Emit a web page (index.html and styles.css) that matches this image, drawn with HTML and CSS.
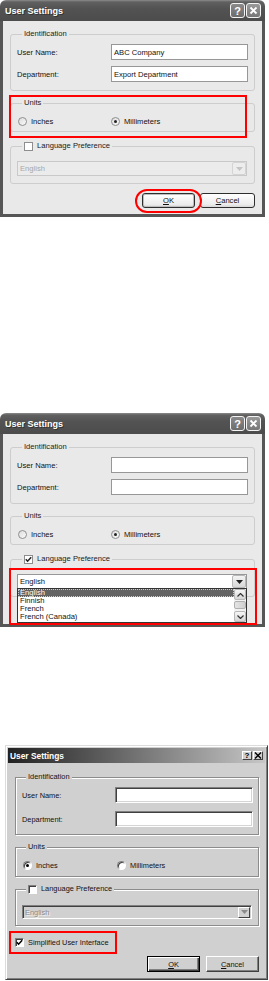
FILE: index.html
```html
<!DOCTYPE html>
<html lang="en">
<head>
  <meta charset="UTF-8">
  <title>User Settings</title>
  <link rel="stylesheet" href="styles.css">
</head>
<body>

<!-- First dialog: units and OK marked -->
<div class="dialog xp d1">
  <div class="titlebar">
    <span class="title">User Settings</span>
    <span class="tbtns">
      <span class="tbtn help">?</span>
      <span class="tbtn close"><svg viewBox="0 0 13 13" width="13" height="13"><path d="M3.5 3.5 L9.5 9.5 M9.5 3.5 L3.5 9.5" stroke="#fff" stroke-width="1.8"/></svg></span>
    </span>
  </div>
  <div class="body">
    <fieldset class="group ident">
      <legend>Identification</legend>
      <div class="field"><label>User Name:</label><div class="edit">ABC Company</div></div>
      <div class="field"><label>Department:</label><div class="edit">Export Department</div></div>
    </fieldset>
    <fieldset class="group units">
      <legend>Units</legend>
      <div class="radios">
        <span class="opt"><span class="radio"></span>Inches</span>
        <span class="opt"><span class="radio on"></span>Millimeters</span>
      </div>
    </fieldset>
    <fieldset class="group lang">
      <legend><span class="check"></span>Language Preference</legend>
      <div class="combo disabled"><span class="value">English</span><span class="arrow"><svg viewBox="0 0 7 4" width="7" height="4"><path d="M0 0 H7 L3.5 4 Z" fill="#c4c4c4"/></svg></span></div>
    </fieldset>
    <div class="buttons">
      <span class="btn ok"><u>O</u>K</span>
      <span class="btn cancel"><u>C</u>ancel</span>
    </div>
  </div>
  <div class="mark units-mark"></div>
  <div class="mark ok-mark"></div>
</div>

<!-- Second dialog: language list open -->
<div class="dialog xp d2">
  <div class="titlebar">
    <span class="title">User Settings</span>
    <span class="tbtns">
      <span class="tbtn help">?</span>
      <span class="tbtn close"><svg viewBox="0 0 13 13" width="13" height="13"><path d="M3.5 3.5 L9.5 9.5 M9.5 3.5 L3.5 9.5" stroke="#fff" stroke-width="1.8"/></svg></span>
    </span>
  </div>
  <div class="body">
    <fieldset class="group ident">
      <legend>Identification</legend>
      <div class="field"><label>User Name:</label><div class="edit"></div></div>
      <div class="field"><label>Department:</label><div class="edit"></div></div>
    </fieldset>
    <fieldset class="group units">
      <legend>Units</legend>
      <div class="radios">
        <span class="opt"><span class="radio"></span>Inches</span>
        <span class="opt"><span class="radio on"></span>Millimeters</span>
      </div>
    </fieldset>
    <fieldset class="group lang">
      <legend><span class="check on"><svg viewBox="0 0 9 9" width="9" height="9"><path d="M1.8 4.2 L3.6 6.2 L7.2 2.2" stroke="#222" stroke-width="1.5" fill="none"/></svg></span>Language Preference</legend>
      <div class="combo"><span class="value">English</span><span class="arrow"><svg viewBox="0 0 7 4" width="7" height="4"><path d="M0 0 H7 L3.5 4 Z" fill="#222"/></svg></span>
        <div class="droplist">
          <div class="items">
            <div class="item sel">English</div>
            <div class="item">Finnish</div>
            <div class="item">French</div>
            <div class="item">French (Canada)</div>
          </div>
          <div class="scroll">
            <span class="sbtn"><svg viewBox="0 0 7 4" width="7" height="4"><path d="M0.5 3.5 L3.5 0.5 L6.5 3.5" stroke="#333" stroke-width="1.2" fill="none"/></svg></span>
            <span class="thumb"></span>
            <span class="track"></span>
            <span class="sbtn"><svg viewBox="0 0 7 4" width="7" height="4"><path d="M0.5 0.5 L3.5 3.5 L6.5 0.5" stroke="#333" stroke-width="1.2" fill="none"/></svg></span>
          </div>
        </div>
      </div>
    </fieldset>
  </div>
  <div class="mark list-mark"></div>
</div>

<!-- Third dialog: classic look, simplified UI checked -->
<div class="dialog classic d3">
  <div class="titlebar">
    <span class="title">User Settings</span>
    <span class="tbtns">
      <span class="tbtn">?</span>
      <span class="tbtn"><svg viewBox="0 0 8 7" width="8" height="7"><path d="M1 0.5 L7 6.5 M7 0.5 L1 6.5" stroke="#000" stroke-width="1.4"/></svg></span>
    </span>
  </div>
  <div class="body">
    <fieldset class="group ident">
      <legend>Identification</legend>
      <div class="field"><label>User Name:</label><div class="edit"></div></div>
      <div class="field"><label>Department:</label><div class="edit"></div></div>
    </fieldset>
    <fieldset class="group units">
      <legend>Units</legend>
      <div class="radios">
        <span class="opt"><span class="radio on"></span>Inches</span>
        <span class="opt"><span class="radio"></span>Millimeters</span>
      </div>
    </fieldset>
    <fieldset class="group lang">
      <legend><span class="check"></span>Language Preference</legend>
      <div class="combo disabled"><span class="value">English</span><span class="arrow"><svg viewBox="0 0 7 4" width="7" height="4"><path d="M0 0 H7 L3.5 4 Z" fill="#8a8a8a"/></svg></span></div>
    </fieldset>
    <div class="simple">
      <span class="check on"><svg viewBox="0 0 9 9" width="9" height="9"><path d="M1.8 4.2 L3.6 6.2 L7.2 2.2" stroke="#000" stroke-width="1.5" fill="none"/></svg></span>Simplified User Interface
    </div>
    <div class="buttons">
      <span class="btn ok"><u>O</u>K</span>
      <span class="btn cancel"><u>C</u>ancel</span>
    </div>
  </div>
  <div class="mark simple-mark"></div>
</div>

</body>
</html>
```

FILE: styles.css
```css
body {
  margin: 0;
  background: #fff;
  font-family: "Liberation Sans", Arial, sans-serif;
  color: #111;
}

.dialog {
  position: relative;
  box-sizing: border-box;
}

/* Shared group box */
fieldset.group {
  margin: 0;
  min-width: 0;
}

legend {
  display: flex;
  align-items: center;
  height: 10px;
  line-height: 10px;
  padding: 0 2px;
  margin-left: 5px;
}

.field {
  display: flex;
  align-items: center;
}

.field label {
  flex: none;
}

.edit {
  flex: 1;
  display: flex;
  align-items: center;
  box-sizing: border-box;
  background: #fff;
  padding-left: 2px;
}

.radios {
  display: flex;
  align-items: center;
  padding-left: 1px;
}

.opt {
  display: flex;
  align-items: center;
  gap: 4px;
}

.radio {
  width: 9px;
  height: 9px;
  box-sizing: border-box;
  border-radius: 50%;
  display: flex;
  align-items: center;
  justify-content: center;
}

.radio.on::after {
  content: "";
  width: 3px;
  height: 3px;
  border-radius: 50%;
  background: #222;
}

.check {
  width: 9px;
  height: 9px;
  box-sizing: border-box;
  display: inline-flex;
  align-items: center;
  justify-content: center;
  margin-right: 4px;
  background: #fff;
}

.check svg {
  flex: none;
}

.combo {
  position: relative;
  display: flex;
  align-items: center;
  box-sizing: border-box;
  background: #fff;
}

.combo .value {
  flex: 1;
  padding-left: 2px;
}

.combo .arrow {
  display: flex;
  align-items: center;
  justify-content: center;
  box-sizing: border-box;
}

.buttons {
  display: flex;
  justify-content: flex-end;
}

.btn {
  display: flex;
  align-items: center;
  justify-content: center;
  box-sizing: border-box;
}

/* Red annotation marks over the screenshots */
.mark {
  position: absolute;
  border: 2px solid #f00;
  box-sizing: border-box;
}

/* ---------- XP look ---------- */
.xp {
  width: 265px;
  font-size: 7.6px;
}

.xp .titlebar {
  height: 21px;
  display: flex;
  align-items: center;
  justify-content: space-between;
  padding: 0 4px 0 5px;
  border-radius: 6px 6px 0 0;
  background: linear-gradient(#8c8c8c 0, #606060 2px, #535353 40%, #4c4c4c 100%);
}

.xp .title {
  color: #fff;
  font-weight: bold;
  font-size: 9px;
  text-shadow: 1px 1px 0 #333;
}

.xp .tbtns {
  display: flex;
  gap: 1px;
}

.xp .tbtn {
  width: 15px;
  height: 15px;
  box-sizing: border-box;
  border: 1px solid #f4f4f4;
  border-radius: 3px;
  display: flex;
  align-items: center;
  justify-content: center;
  color: #fff;
  font-weight: bold;
  font-size: 11px;
}

.xp .help {
  background: linear-gradient(#8a8a8a, #6c6c6c);
}

.xp .close {
  background: linear-gradient(#9a9a9a, #777);
}

.xp .body {
  background: #e9e9e9;
  border: 3px solid #565656;
  border-top: 0;
  padding: 8px 7px 6px;
  display: flex;
  flex-direction: column;
}

.xp fieldset.group {
  border: 1px solid #cdcdcd;
  border-radius: 3px;
}

.xp legend {
  color: #222;
}

.xp .ident {
  padding: 5px 6px 8px;
  display: flex;
  flex-direction: column;
  gap: 6px;
}

.xp .field label {
  width: 94px;
}

.xp .edit {
  height: 16px;
  border: 1px solid #979797;
}

.xp .units {
  margin-top: 7px;
  padding: 6px 6px 3px;
}

.xp .radios {
  height: 14px;
}

.xp .opt:first-child {
  width: 93px;
}

.xp .radio {
  border: 1px solid #8e8e8e;
  background: linear-gradient(135deg, #dcdcdc, #fafafa);
}

.xp .check {
  border: 1px solid #8e8e8e;
}

.xp .lang {
  margin-top: 9px;
  padding: 10px 7px 7px 6px;
}

.xp .combo {
  height: 15px;
  border: 1px solid #979797;
}

.xp .combo .arrow {
  width: 14px;
  height: 13px;
  border: 1px solid #b8b8b8;
  border-radius: 2px;
  background: linear-gradient(#f4f4f4, #d8d8d8);
}

.xp .combo.disabled {
  background: #ebebeb;
  border-color: #c9c9c9;
  color: #a8a8a8;
}

.xp .combo.disabled .arrow {
  border-color: #d4d4d4;
  background: #ededed;
}

.xp .buttons {
  margin-top: 9px;
  gap: 5px;
}

.xp .btn {
  height: 15px;
  border: 1px solid #2e2e2e;
  border-radius: 3px;
  background: linear-gradient(#fff, #ececec 80%, #d6d6d6);
}

.xp .btn.ok {
  width: 53px;
  box-shadow: inset 0 0 0 1px #bdbdbd;
}

.xp .btn.cancel {
  width: 55px;
}

.d1 .units-mark {
  left: 9px;
  top: 95px;
  width: 238px;
  height: 43px;
}

.d1 .ok-mark {
  left: 135px;
  top: 189px;
  width: 67px;
  height: 24px;
  border-radius: 12px;
}

/* ---------- Second dialog ---------- */
.d2 {
  margin-top: 196px;
  height: 214px;
  overflow: hidden;
}

.d2 .body {
  height: 193px;
  box-sizing: border-box;
}

.droplist {
  position: absolute;
  top: 100%;
  left: -1px;
  right: -1px;
  display: flex;
  background: #fff;
  border: 1px solid #333;
  z-index: 2;
}

.droplist .items {
  flex: 1;
}

.droplist .item {
  height: 8px;
  line-height: 8px;
  padding-left: 2px;
  color: #111;
}

.droplist .item.sel {
  background: #636363;
  color: #fff;
  outline: 1px dotted #ccc;
  outline-offset: -1px;
}

.droplist .scroll {
  width: 12px;
  background: #f2f2f2;
  display: flex;
  flex-direction: column;
  gap: 1px;
}

.droplist .sbtn {
  height: 9px;
  flex: none;
  display: flex;
  align-items: center;
  justify-content: center;
  border: 1px solid #b8b8b8;
  border-radius: 2px;
  background: linear-gradient(#f6f6f6, #d6d6d6);
}

.droplist .thumb {
  height: 6px;
  flex: none;
  border: 1px solid #b0b0b0;
  border-radius: 2px;
  background: linear-gradient(90deg, #e4e4e4, #cfcfcf);
}

.droplist .track {
  flex: 1;
}

.d2 .list-mark {
  left: 9px;
  top: 155px;
  width: 248px;
  height: 57px;
}

/* ---------- Classic look ---------- */
.classic {
  width: 263px;
  margin-top: 118px;
  margin-left: 5px;
  font-size: 7.4px;
  background: #d0d0d0;
  border: 1px solid;
  border-color: #dcdcdc #404040 #404040 #dcdcdc;
  box-shadow: inset 1px 1px 0 #fff, inset -1px -1px 0 #808080;
  padding: 2px;
}

.classic .titlebar {
  height: 15px;
  display: flex;
  align-items: center;
  justify-content: space-between;
  padding: 0 2px;
  background: linear-gradient(90deg, #222 0%, #5a5a5a 35%, #c6c6c6 100%);
}

.classic .title {
  color: #fff;
  font-weight: bold;
  font-size: 8.4px;
}

.classic .tbtns {
  display: flex;
  gap: 1px;
}

.classic .tbtn {
  width: 10px;
  height: 9px;
  box-sizing: border-box;
  display: flex;
  align-items: center;
  justify-content: center;
  background: #d0d0d0;
  border: 1px solid;
  border-color: #fff #404040 #404040 #fff;
  font-weight: bold;
  font-size: 8px;
  color: #000;
}

.classic .body {
  padding: 9px 6px 5px 7px;
  display: flex;
  flex-direction: column;
}

.classic fieldset.group {
  border: 1px solid #8c8c8c;
  box-shadow: inset 1px 1px 0 #fff, 1px 1px 0 #fff;
}

.classic legend {
  margin-left: 4px;
  background: #d0d0d0;
  color: #111;
}

.classic .ident {
  padding: 5px 5px 7px 6px;
  display: flex;
  flex-direction: column;
  gap: 8px;
}

.classic .field label {
  width: 93px;
}

.classic .edit {
  height: 16px;
  border: 1px solid;
  border-color: #808080 #fff #fff #808080;
  box-shadow: inset 1px 1px 0 #404040, inset -1px -1px 0 #d4d4d4;
}

.classic .units {
  margin-top: 7px;
  padding: 6px 6px 4px;
}

.classic .radios {
  height: 14px;
}

.classic .opt:first-child {
  width: 94px;
}

.classic .radio {
  border: 1px solid;
  border-color: #808080 #fff #fff #808080;
  background: #fff;
  box-shadow: inset 1px 1px 0 #404040;
}

.classic .radio.on::after {
  background: #000;
}

.classic .check {
  border: 1px solid;
  border-color: #808080 #fff #fff #808080;
  box-shadow: inset 1px 1px 0 #404040;
}

.classic .lang {
  margin-top: 7px;
  padding: 11px 6px 6px;
}

.classic .combo {
  height: 14px;
  border: 1px solid;
  border-color: #808080 #fff #fff #808080;
  box-shadow: inset 1px 1px 0 #404040;
}

.classic .combo.disabled {
  background: #d0d0d0;
  color: #8a8a8a;
}

.classic .combo.disabled .value {
  text-shadow: 1px 1px 0 #f4f4f4;
}

.classic .combo .arrow {
  width: 12px;
  height: 11px;
  margin-right: 1px;
  background: #d0d0d0;
  border: 1px solid;
  border-color: #fff #404040 #404040 #fff;
}

.classic .simple {
  margin-top: 10px;
  height: 12px;
  display: flex;
  align-items: center;
}

.classic .buttons {
  margin-top: 8px;
  gap: 6px;
}

.classic .btn {
  width: 53px;
  height: 16px;
  background: #d0d0d0;
  border: 1px solid;
  border-color: #fff #404040 #404040 #fff;
  box-shadow: inset -1px -1px 0 #808080;
}

.classic .btn.ok {
  border-color: #000;
  box-shadow: inset 1px 1px 0 #fff, inset -1px -1px 0 #404040, inset -2px -2px 0 #808080;
}

.d3 .simple-mark {
  left: 3px;
  top: 185px;
  width: 108px;
  height: 23px;
}
```
